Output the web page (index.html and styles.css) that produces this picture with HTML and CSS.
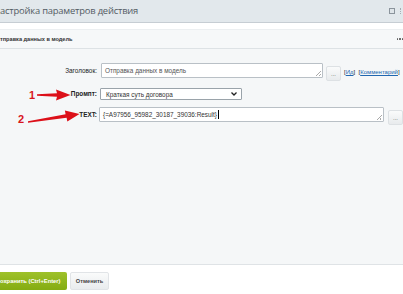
FILE: index.html
```html
<!DOCTYPE html>
<html lang="ru">
<head>
    <meta charset="UTF-8">
    <title>Настройка параметров действия</title>
    <link rel="stylesheet" href="styles.css">
</head>
<body>
    <div class="dialog">
        <div class="dialog-head">
            <span class="dialog-title">астройка параметров действия</span>
            <span class="head-icons">
                <span class="icon-max"></span>
                <span class="icon-close"></span>
            </span>
        </div>

        <div class="section-bar">
            <span class="section-title">тправка данных в модель</span>
            <span class="section-more"><i></i><i></i><i></i></span>
        </div>

        <div class="dialog-body">
            <div class="row row-title">
                <label class="row-label">Заголовок:</label>
                <div class="field field-title">
                    <span class="field-text">Отправка данных в модель</span>
                    <span class="grip"></span>
                </div>
                <button type="button" class="dots-btn">...</button>
                <span class="row-links">[<a href="#">Ид</a>]&nbsp; [<a href="#">Комментарий</a>]</span>
            </div>

            <div class="row row-prompt">
                <span class="marker">1</span>
                <svg class="arrow arrow-one" width="34" height="12" viewBox="0 0 34 12">
                    <path d="M0 5.3 L20 4.3 L19 0.5 L33.5 6 L19 11.5 L20 7.7 L0 6.7 Z" fill="#dc1019"/>
                </svg>
                <label class="row-label row-label-bold">Промпт:</label>
                <div class="select">
                    <span class="field-text">Краткая суть договора</span>
                    <svg class="chevron" width="6" height="4" viewBox="0 0 6 4"><path d="M0.5 0.5 L3 3 L5.5 0.5" stroke="#222" stroke-width="1.3" fill="none"/></svg>
                </div>
            </div>

            <div class="row row-text">
                <span class="marker marker-two">2</span>
                <svg class="arrow arrow-two" width="52" height="16" viewBox="0 0 52 16">
                    <path d="M0 12.3 L37.6 5.2 L36.9 1.4 L51.5 5 L39.3 12.6 L38.6 8.7 L0 13.7 Z" fill="#dc1019"/>
                </svg>
                <label class="row-label row-label-bold">TEXT:</label>
                <div class="field field-text-area">
                    <span class="field-text">{=A97956_95982_30187_39036:Result}<span class="caret"></span></span>
                    <span class="grip"></span>
                </div>
                <button type="button" class="dots-btn dots-btn-last">...</button>
            </div>
        </div>

        <div class="dialog-foot">
            <button type="button" class="btn-save">охранить (Ctrl+Enter)</button>
            <button type="button" class="btn-cancel">Отменить</button>
        </div>
    </div>
</body>
</html>
```

FILE: styles.css
```css
/* Reset and basic styling */
* {
    margin: 0;
    padding: 0;
    box-sizing: border-box;
}

body {
    font-family: 'Liberation Sans', Arial, sans-serif;
    background: #fff;
    color: #333;
    width: 403px;
    height: 294px;
    overflow: hidden;
}

.dialog {
    display: flex;
    flex-direction: column;
    height: 294px;
}

/* Header */
.dialog-head {
    height: 23px;
    background: #e2e8ec;
    border-bottom: 1px solid #c6cdd3;
    display: flex;
    align-items: center;
    justify-content: space-between;
}

.dialog-title {
    font-family: 'Open Sans', sans-serif;
    font-size: 9.4px;
    letter-spacing: -0.2px;
    color: #535b63;
    padding-bottom: 1px;
}

.head-icons {
    display: flex;
    align-items: center;
    gap: 5px;
    margin-right: -5px;
}

.icon-max {
    width: 6px;
    height: 6px;
    border: 1px solid #8b949c;
    background: #dfe5e9;
}

.icon-close {
    width: 8px;
    height: 6px;
    border-left: 1px dotted #a5adb4;
}

/* Section bar */
.section-bar {
    margin-top: 6px;
    height: 20px;
    background: #f6f8f9;
    border-top: 1px solid #eceff1;
    border-bottom: 1px solid #dde2e5;
    display: flex;
    align-items: center;
    justify-content: space-between;
}

.section-title {
    font-size: 5.6px;
    font-weight: 700;
    color: #333;
}

.section-more {
    display: flex;
    gap: 1px;
}

.section-more i {
    width: 1.5px;
    height: 1.5px;
    background: #555;
    border-radius: 50%;
}

/* Body */
.dialog-body {
    flex: 1;
    background: #f5f7f8;
    border-bottom: 1px solid #dfe3e6;
    padding-top: 14px;
}

.row {
    display: flex;
    align-items: flex-start;
    position: relative;
}

.row-label {
    width: 101px;
    text-align: right;
    padding-right: 4px;
    font-size: 6.4px;
    line-height: 15px;
    color: #222;
}

.row-label-bold {
    font-weight: 700;
}

.field {
    height: 15px;
    background: #fff;
    border: 1px solid #b9c0c6;
    border-radius: 1px;
    display: flex;
    align-items: center;
    padding-left: 3px;
    position: relative;
}

.field-title {
    width: 222px;
}

.field-text {
    font-size: 6.4px;
    color: #333;
    white-space: nowrap;
}

.field-title .field-text {
    color: #555;
}

.grip {
    position: absolute;
    right: 1px;
    bottom: 1px;
    width: 5px;
    height: 5px;
    background: linear-gradient(135deg, transparent 45%, #aaa 45%, #aaa 55%, transparent 55%, transparent 70%, #aaa 70%, #aaa 80%, transparent 80%);
}

.caret {
    display: inline-block;
    width: 1px;
    height: 9px;
    background: #000;
    vertical-align: -2px;
    margin-left: 1px;
}

.dots-btn {
    width: 15px;
    height: 15px;
    margin-left: 3px;
    margin-top: 3px;
    border: 1px solid #dde1e4;
    border-radius: 2px;
    background: linear-gradient(#fafbfb, #e8ebed);
    font-size: 6px;
    color: #555;
    line-height: 8px;
    font-family: inherit;
}

.row-links {
    font-size: 6px;
    line-height: 18px;
    color: #222;
    margin-left: 3px;
    white-space: nowrap;
}

.row-links a {
    color: #2067b0;
}

/* Prompt row */
.row-prompt {
    margin-top: 7px;
}

.row-prompt .row-label {
    width: 100px;
    padding-right: 3px;
    line-height: 12px;
}

.marker {
    position: absolute;
    left: 29px;
    top: 2px;
    font-size: 11px;
    line-height: 11px;
    font-weight: 700;
    color: #d8161d;
}

.arrow {
    position: absolute;
}

.arrow-one {
    left: 37px;
    top: 1px;
}

.select {
    width: 142px;
    height: 12px;
    background: #fff;
    border: 1px solid #9aa3aa;
    border-radius: 1px;
    display: flex;
    align-items: center;
    justify-content: space-between;
    padding: 0 4px 0 5px;
}

/* TEXT row */
.row-text {
    margin-top: 7px;
}

.row-text .row-label {
    width: 99px;
    padding-right: 2px;
}

.marker-two {
    left: 18px;
    top: 7px;
}

.arrow-two {
    left: 28px;
    top: 2px;
}

.field-text-area {
    width: 285px;
}

.dots-btn-last {
    margin-left: 4px;
}

/* Footer */
.dialog-foot {
    height: 29px;
    background: #fff;
    display: flex;
    align-items: center;
    gap: 3px;
    padding-top: 2px;
}

.btn-save {
    height: 18px;
    width: 67px;
    border: none;
    border-radius: 0 2px 2px 0;
    background: linear-gradient(#9ec12a, #84ac12);
    color: #fff;
    font-family: inherit;
    font-size: 5.8px;
    font-weight: 700;
    text-align: left;
    white-space: nowrap;
}

.btn-cancel {
    height: 18px;
    width: 39px;
    border: 1px solid #e1e4e7;
    border-radius: 2px;
    background: linear-gradient(#fafbfb, #e9ecee);
    color: #444;
    font-family: inherit;
    font-size: 5.6px;
    font-weight: 700;
}
```
